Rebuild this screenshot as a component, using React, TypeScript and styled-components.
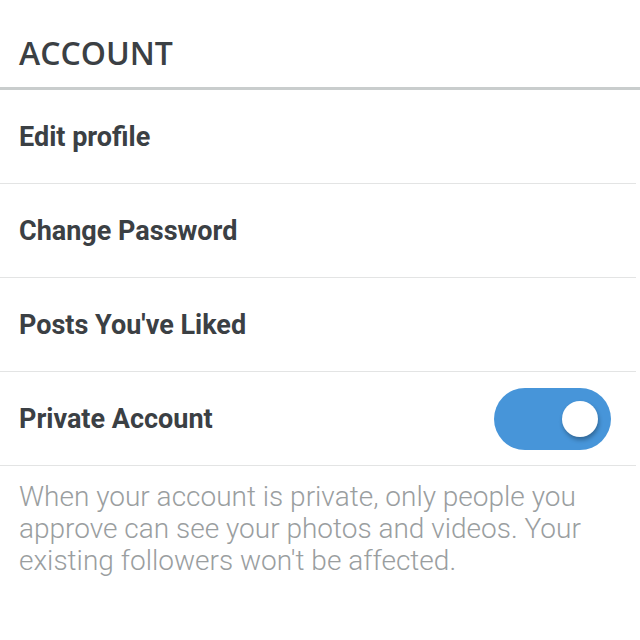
import React from "react";
import styled, { createGlobalStyle } from "styled-components";

const Global = createGlobalStyle`
  html, body { margin: 0; padding: 0; background: #ffffff; }
  body { font-family: Roboto, "Liberation Sans", sans-serif; }
`;

const Page = styled.div`
  width: 640px;
  height: 640px;
  background: #fff;
  display: flex;
  flex-direction: column;
  overflow: hidden;
`;

const Header = styled.div`
  height: 90px;
  box-sizing: border-box;
  padding: 17px 19px 0;
  display: flex;
  align-items: center;
  border-bottom: 3px solid #c9cdcd;
  font-family: "Open Sans", sans-serif;
  font-weight: 600;
  font-size: 32px;
  color: #3b4044;
`;

const Row = styled.div`
  height: 94px;
  box-sizing: border-box;
  margin-right: 4px;
  padding: 0 25px 0 19px;
  display: flex;
  align-items: center;
  justify-content: space-between;
  border-bottom: 1px solid #e3e4e4;
`;

const Label = styled.span`
  font-family: Roboto, sans-serif;
  font-weight: 700;
  font-size: 27px;
  color: #3b4044;
`;

const Toggle = styled.div<{ $on: boolean }>`
  width: 117px;
  height: 62px;
  border-radius: 31px;
  background: ${(p) => (p.$on ? "#4795d9" : "#cccccc")};
  display: flex;
  align-items: center;
  justify-content: ${(p) => (p.$on ? "flex-end" : "flex-start")};
  padding: 0 13px;
  box-sizing: border-box;
`;

const Knob = styled.div`
  width: 36px;
  height: 36px;
  border-radius: 50%;
  background: #fff;
  box-shadow: 1px 3px 4px rgba(0, 0, 0, 0.3);
`;

const Note = styled.p`
  margin: 0;
  padding: 15px 19px 0;
  font-family: Roboto, sans-serif;
  font-weight: 300;
  font-size: 28px;
  line-height: 32px;
  color: #9a9e9f;
`;

const rows = ["Edit profile", "Change Password", "Posts You've Liked"];

export default function App() {
  return (
    <Page>
      <Global />
      <Header>ACCOUNT</Header>
      {rows.map((r) => (
        <Row key={r}>
          <Label>{r}</Label>
        </Row>
      ))}
      <Row>
        <Label>Private Account</Label>
        <Toggle $on>
          <Knob />
        </Toggle>
      </Row>
      <Note>
        When your account is private, only people you approve can see your photos and videos. Your
        existing followers won't be affected.
      </Note>
    </Page>
  );
}
